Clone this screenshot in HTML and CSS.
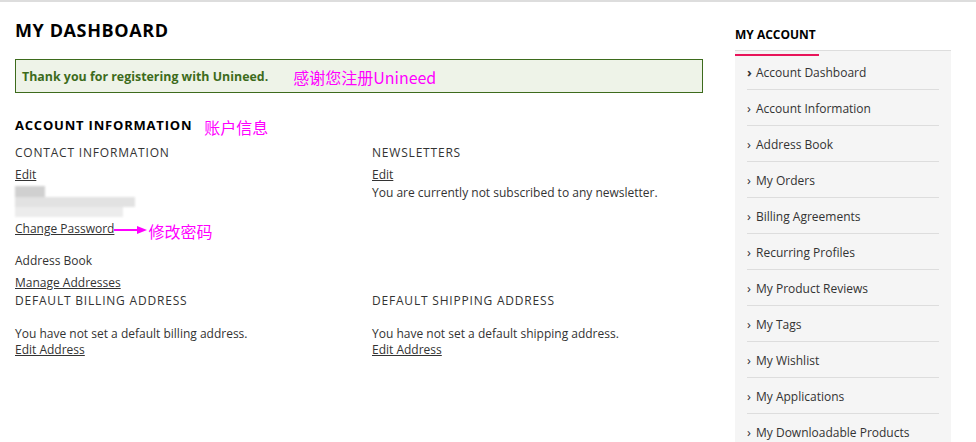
FILE: index.html
```html
<!DOCTYPE html>
<html lang="en">
<head>
<meta charset="UTF-8" />
<meta name="viewport" content="width=device-width, initial-scale=1.0">
<title>My Dashboard</title>
<link rel="stylesheet" href="styles.css">
</head>
<body>

<div class="page">
  <div class="main">
    <h1 class="title">MY DASHBOARD</h1>

    <div class="success">
      <span class="success-text">Thank you for registering with Unineed.</span>
      <span class="note note-success">感谢您注册Unineed</span>
    </div>

    <h2 class="section-title">ACCOUNT INFORMATION <span class="note note-section">账户信息</span></h2>

    <div class="cols">
      <div class="box">
        <h3 class="box-title">CONTACT INFORMATION</h3>
        <a href="#" class="link">Edit</a>
        <div class="blur">
          <div class="blur-row r1"></div>
          <div class="blur-row r2"></div>
          <div class="blur-row r3"></div>
        </div>
        <div class="pw-row">
          <a href="#" class="link">Change Password</a>
          <svg class="arrow" width="34" height="10" viewBox="0 0 34 10">
            <line x1="0" y1="5" x2="26" y2="5" stroke="#ff00ff" stroke-width="2"/>
            <polygon points="23,1 33,5 23,9" fill="#ff00ff"/>
          </svg>
          <span class="note">修改密码</span>
        </div>
      </div>
      <div class="box">
        <h3 class="box-title">NEWSLETTERS</h3>
        <a href="#" class="link">Edit</a>
        <p class="text">You are currently not subscribed to any newsletter.</p>
      </div>
    </div>

    <div class="addr-book">
      <p class="text">Address Book</p>
      <a href="#" class="link">Manage Addresses</a>
    </div>

    <div class="cols addr-cols">
      <div class="box">
        <h3 class="box-title">DEFAULT BILLING ADDRESS</h3>
        <p class="text addr-text">You have not set a default billing address.</p>
        <a href="#" class="link">Edit Address</a>
      </div>
      <div class="box">
        <h3 class="box-title">DEFAULT SHIPPING ADDRESS</h3>
        <p class="text addr-text">You have not set a default shipping address.</p>
        <a href="#" class="link">Edit Address</a>
      </div>
    </div>
  </div>

  <div class="sidebar">
    <div class="side-head"><span>MY ACCOUNT</span></div>
    <ul class="side-list">
      <li class="active"><a href="#">Account Dashboard</a></li>
      <li><a href="#">Account Information</a></li>
      <li><a href="#">Address Book</a></li>
      <li><a href="#">My Orders</a></li>
      <li><a href="#">Billing Agreements</a></li>
      <li><a href="#">Recurring Profiles</a></li>
      <li><a href="#">My Product Reviews</a></li>
      <li><a href="#">My Tags</a></li>
      <li><a href="#">My Wishlist</a></li>
      <li><a href="#">My Applications</a></li>
      <li><a href="#">My Downloadable Products</a></li>
    </ul>
  </div>
</div>

</body>
</html>
```

FILE: styles.css
```css
body, html { margin:0; padding:0; font-family:"Open Sans", sans-serif; color:#333; background:#fff; }
body { border-top:2px solid #ddd; overflow:hidden; }
.page { display:flex; padding-left:15px; }
.main { width:688px; }

.title { margin:16px 0 0; font-size:18px; line-height:24px; font-weight:700; letter-spacing:0.6px; color:#000; }

.success { margin-top:17px; height:32px; border:1px solid #3d6b1c; background:#eef3e8; display:flex; align-items:center; padding-left:6px; }
.success-text { font-size:12.4px; font-weight:700; color:#3d6b1c; }
.note { font-family:"Noto Sans CJK SC", sans-serif; font-size:16px; color:#ff00ff; font-weight:400; letter-spacing:0; }
.note-success { margin-left:25px; margin-top:2px; }

.section-title { margin:20px 0 0; font-size:13px; line-height:20px; font-weight:700; letter-spacing:0.8px; color:#000; display:flex; align-items:center; }
.note-section { margin-left:12px; margin-top:4px; }

.cols { display:grid; grid-template-columns:357px 1fr; }
.box-title { margin:6px 0 0; font-size:12px; line-height:20px; font-weight:400; letter-spacing:0.8px; color:#333; }
.link { display:block; width:fit-content; font-size:12px; line-height:18px; color:#333; text-decoration:underline; margin-top:3px; }
.text { margin:0; font-size:12px; line-height:18px; color:#333; }

.blur { margin-top:2px; height:31px; filter:blur(1.2px); }
.blur-row { height:10px; }
.r1 { width:30px; height:11px; background:#d0d0d0; }
.r2 { width:120px; background:#e2e2e2; }
.r3 { width:108px; background:#ececec; }

.pw-row { display:flex; align-items:center; height:24px; }
.pw-row .link { margin-top:0; }
.arrow { margin-top:1px; }
.pw-row .note { line-height:16px; margin-top:4px; }

.addr-book { margin-top:11px; }
.addr-book .link { margin-top:4px; }

.addr-cols .box-title { margin-top:-1px; }
.addr-cols .addr-text { margin-top:15px; line-height:16px; }
.addr-cols .link { margin-top:0; line-height:16px; }

.sidebar { margin-left:32px; width:216px; }
.side-head { margin-top:20px; border-bottom:1px solid #ddd; height:28px; }
.side-head span { display:inline-block; font-size:12px; font-weight:700; color:#000; line-height:16px; padding-bottom:11px; border-bottom:2px solid #e8145a; width:84px; }
.side-list { list-style:none; margin:0; padding:3px 12px 0; background:#f5f5f5; height:400px; }
.side-list li { border-bottom:1px solid #ddd; height:35px; display:flex; align-items:center; }
.side-list a { font-size:12px; color:#333; text-decoration:none; }
.side-list a::before { content:"\203A"; display:inline-block; width:9px; font-size:13px; color:#333; }
.side-list li.active a::before { font-weight:700; }
```
